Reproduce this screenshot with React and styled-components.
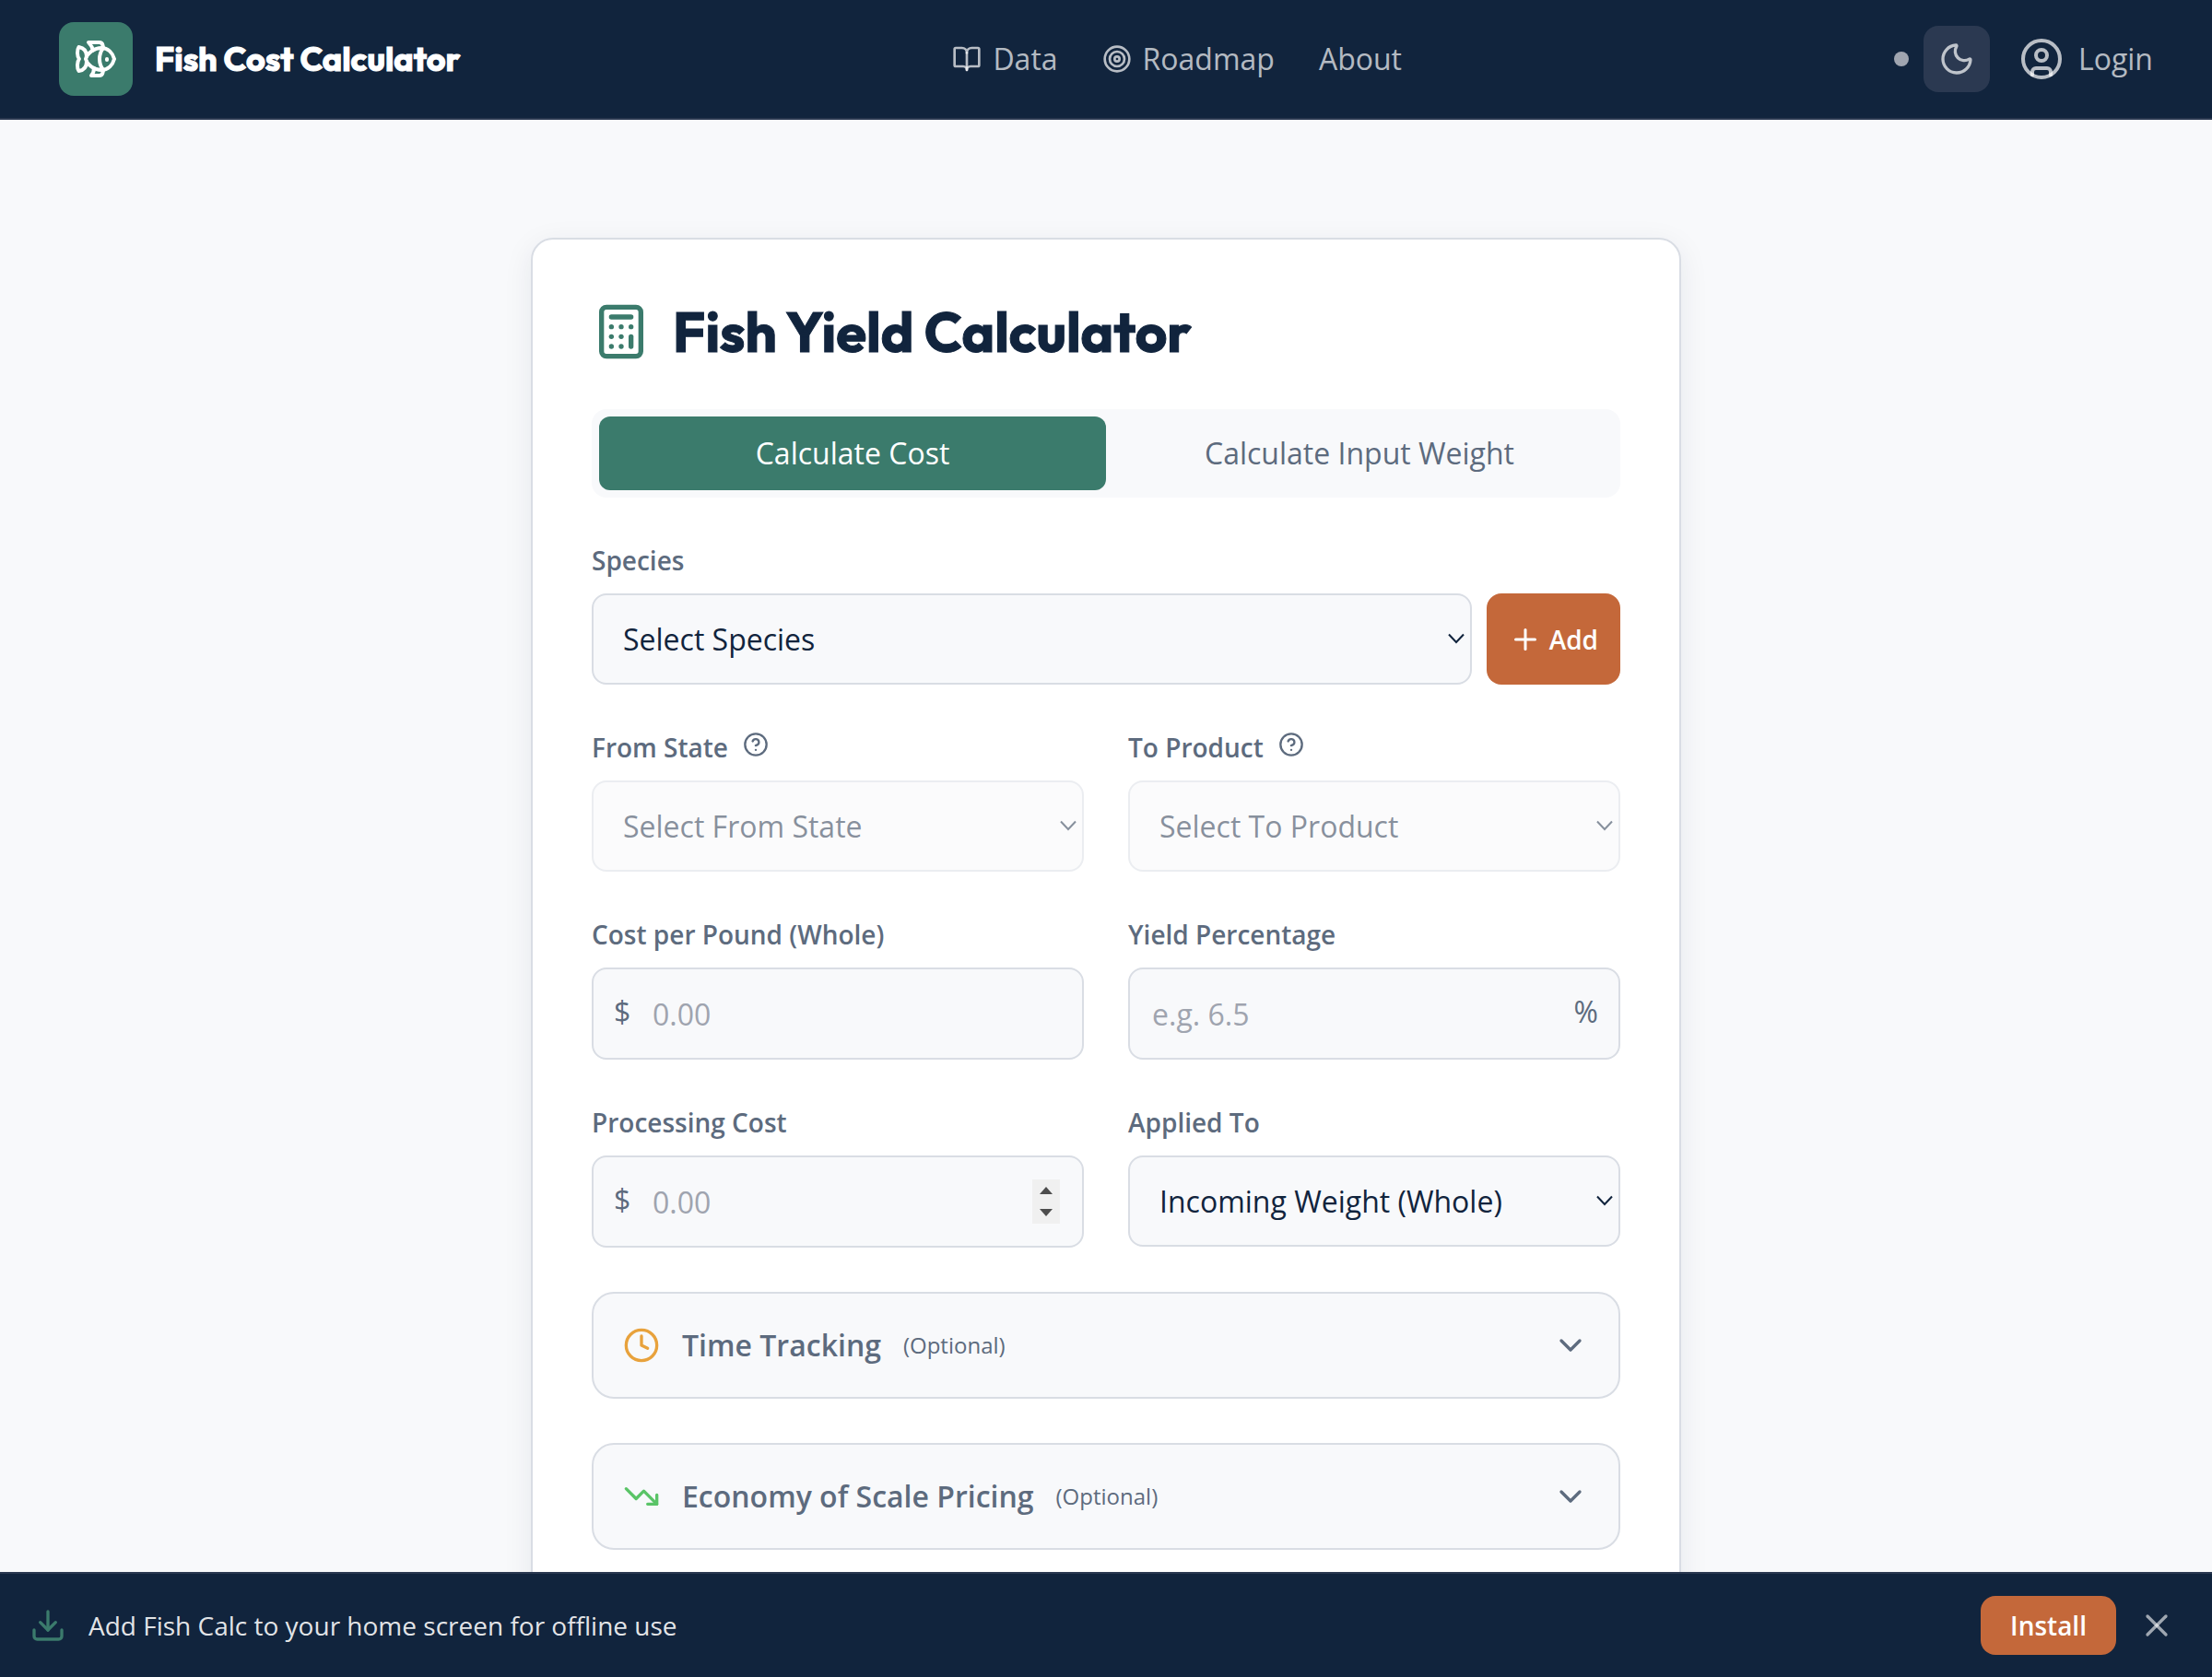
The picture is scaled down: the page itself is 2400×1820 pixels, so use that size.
import {useState} from "react";
import styled, {createGlobalStyle, css} from "styled-components";
import {
    BookOpen, Calculator, ChevronDown, CircleHelp, CircleUser, Clock, Download,
    Fish, Moon, Plus, Target, TrendingDown, X
} from "lucide-react";

const navy = "#11243d";
const green = "#3b7b6c";
const orange = "#c4683a";
const slate = "#5d6b7e";
const line = "#d9dde4";
const surface = "#f8f9fb";
const display = `Outfit, Lato, sans-serif`;

const GlobalStyle = createGlobalStyle`
  * {
    box-sizing: border-box;
  }

  body {
    margin: 0;
    background: ${surface};
    color: ${navy};
    font-family: "Open Sans", sans-serif;
    font-size: 32px;
    line-height: 48px;
  }

  button, input, select {
    margin: 0;
    font: inherit;
    color: inherit;
  }

  button {
    border: none;
    padding: 0;
    background: none;
    cursor: pointer;
  }

  svg {
    display: block;
    flex-shrink: 0;
  }
`
const Page = styled.div`
  display: flex;
  flex-direction: column;
  height: 100vh;
`
const Header = styled.header`
  display: flex;
  align-items: center;
  justify-content: space-between;
  padding: 24px 64px;
  background: ${navy};
  border-bottom: 2px solid #2a3850;
`
const Brand = styled.a`
  display: flex;
  align-items: center;
  gap: 24px;
  color: #fff;
  text-decoration: none;
  font: 700 36px/40px ${display};
  -webkit-text-stroke: 1px currentColor;
`
const Logo = styled.span`
  padding: 16px;
  border-radius: 16px;
  background: ${green};
`
const Nav = styled.nav`
  display: flex;
  gap: 48px;
`
const NavLink = styled.a`
  display: flex;
  align-items: center;
  gap: ${({$gap}) => $gap || 12}px;
  color: rgba(255, 255, 255, 0.7);
  text-decoration: none;
`
const HeaderActions = styled.div`
  display: flex;
  align-items: center;
  gap: 16px;
`
const StatusDot = styled.span`
  width: 16px;
  height: 16px;
  border-radius: 50%;
  background: #a0a5b0;
`
const ThemeToggle = styled.button`
  margin-right: 16px;
  padding: 16px;
  border-radius: 16px;
  background: #2b3951;
  color: rgba(255, 255, 255, 0.7);
`
const Main = styled.main`
  flex: 1;
  min-height: 0;
  overflow-y: auto;
  scrollbar-width: none;
  padding: 128px 64px;
`
const Card = styled.section`
  max-width: 1248px;
  margin: 0 auto;
  padding: 64px;
  border: 2px solid ${line};
  border-radius: 24px;
  background: #fff;
  box-shadow: 0 8px 32px rgba(17, 36, 61, 0.08);
`
const CardTitle = styled.h1`
  display: flex;
  align-items: center;
  gap: 24px;
  margin: 0 0 48px;
  font: 700 60px/72px ${display};
  -webkit-text-stroke: 1px currentColor;

  svg {
    color: ${green};
  }
`
const Tabs = styled.div`
  display: flex;
  padding: 8px;
  border-radius: 16px;
  background: ${surface};
`
const Tab = styled.button`
  flex: 1;
  padding: 16px;
  border-radius: 12px;
  color: ${slate};

  ${({$active}) => $active && css`
    background: ${green};
    color: #fff;
  `}
`
const Form = styled.form`
  display: flex;
  flex-direction: column;
  gap: 48px;
  margin-top: 48px;
`
const Columns = styled.div`
  display: grid;
  grid-template-columns: 1fr 1fr;
  gap: 48px;
`
const LabelRow = styled.div`
  display: flex;
  align-items: baseline;
  gap: 16px;
  height: 40px;
  margin-bottom: 16px;
  color: ${slate};
  font-size: 28px;
  font-weight: 600;
  line-height: 40px;
`
const HelpButton = styled.button`
  display: inline-flex;
`
const ControlRow = styled.div`
  display: flex;
  gap: 16px;
`
const Control = styled.div`
  position: relative;
  flex: 1;
  opacity: ${({$disabled}) => $disabled ? 0.5 : 1};
`
const box = css`
  display: block;
  width: 100%;
  border: 2px solid ${line};
  border-radius: 16px;
  background: ${surface};
`
const Select = styled.select`
  ${box};
  appearance: none;
  height: 99px;
  padding: 0 32px;
  opacity: 1;
`
const SelectArrow = styled.svg`
  position: absolute;
  top: 43px;
  right: 8px;
  pointer-events: none;
`
const Input = styled.input`
  ${box};
  appearance: textfield;
  height: 100px;
  padding: 0 64px 0 ${({$prefixed}) => $prefixed ? 64 : 24}px;

  &::placeholder {
    color: #9fa4af;
    opacity: 1;
  }

  &::-webkit-inner-spin-button {
    appearance: none;
  }
`
const Affix = styled.span`
  position: absolute;
  top: 24px;
  ${({$side}) => $side}: 24px;
  color: ${slate};
  pointer-events: none;
`
const Spinner = styled.div`
  position: absolute;
  top: 26px;
  right: 26px;
  display: flex;
  flex-direction: column;
  width: 30px;
  background: #f0f0f0;
`
const SpinButton = styled.button`
  display: flex;
  align-items: center;
  justify-content: center;
  height: 24px;
  color: #4d4d4d;
`
const AddButton = styled.button`
  display: flex;
  align-items: center;
  gap: 8px;
  padding: 0 24px;
  border-radius: 16px;
  background: ${orange};
  color: #fff;
  font-size: 28px;
  font-weight: 600;
`
const Accordion = styled.button`
  display: flex;
  align-items: center;
  gap: 24px;
  padding: 32px;
  border: 2px solid ${line};
  border-radius: 24px;
  background: ${surface};
  color: ${slate};
  font-weight: 600;
`
const AccordionIcon = styled.span`
  color: ${({$color}) => $color};
`
const Optional = styled.span`
  flex: 1;
  text-align: left;
  font-size: 24px;
  font-weight: 400;
`
const InstallBar = styled.aside`
  display: flex;
  align-items: center;
  gap: 16px;
  padding: 24px 32px;
  border-top: 2px solid #2a3850;
  background: ${navy};
  color: rgba(255, 255, 255, 0.9);
  font-size: 28px;
  line-height: 40px;
`
const InstallText = styled.p`
  display: flex;
  flex: 1;
  align-items: center;
  gap: 24px;
  margin: 0;

  svg {
    color: ${green};
  }
`
const InstallButton = styled.button`
  padding: 12px 32px;
  border-radius: 16px;
  background: ${orange};
  color: #fff;
  font-weight: 600;
`
const CloseButton = styled.button`
  padding: 8px;
  color: rgba(255, 255, 255, 0.6);
`

const Label = ({id, text, help}) => (
    <LabelRow>
        <label htmlFor={id}>{text}</label>
        {help && <HelpButton type="button" aria-label={`About ${text}`}>
            <CircleHelp size={28}/>
        </HelpButton>}
    </LabelRow>
)

const SelectField = ({id, options, disabled}) => (
    <Control $disabled={disabled}>
        <Select id={id} disabled={disabled}>
            {options.map(option => <option key={option}>{option}</option>)}
        </Select>
        <SelectArrow width="18" height="12" viewBox="0 0 18 12" fill="none" stroke="currentColor" strokeWidth="2">
            <path d="M1 1.5 9 10l8-8.5"/>
        </SelectArrow>
    </Control>
)

const ProcessingCost = () => {
    const [cost, setCost] = useState("")

    const step = (amount) => {
        setCost(Math.max(0, Number(cost) + amount).toFixed(2))
    }

    return (
        <Control>
            <Affix $side="left">$</Affix>
            <Input id="processing" type="number" placeholder="0.00" $prefixed value={cost}
                   onChange={e => setCost(e.currentTarget.value)}/>
            <Spinner>
                <SpinButton type="button" aria-label="Increase" onClick={() => step(0.01)}>
                    <svg width="14" height="8" viewBox="0 0 14 8" fill="currentColor"><path d="M0 8 7 0l7 8z"/></svg>
                </SpinButton>
                <SpinButton type="button" aria-label="Decrease" onClick={() => step(-0.01)}>
                    <svg width="14" height="8" viewBox="0 0 14 8" fill="currentColor"><path d="M0 0h14L7 8z"/></svg>
                </SpinButton>
            </Spinner>
        </Control>
    )
}

const App = () => {
    const [mode, setMode] = useState("cost")
    const [showInstall, setShowInstall] = useState(true)

    return (
        <Page>
            <GlobalStyle/>
            <Header>
                <Brand href="#">
                    <Logo><Fish size={48}/></Logo>
                    Fish Cost Calculator
                </Brand>
                <Nav>
                    <NavLink href="#data"><BookOpen size={32}/>Data</NavLink>
                    <NavLink href="#roadmap"><Target size={32}/>Roadmap</NavLink>
                    <NavLink href="#about">About</NavLink>
                </Nav>
                <HeaderActions>
                    <StatusDot/>
                    <ThemeToggle aria-label="Toggle theme"><Moon size={40}/></ThemeToggle>
                    <NavLink href="#login" $gap={16}><CircleUser size={48}/>Login</NavLink>
                </HeaderActions>
            </Header>

            <Main>
                <Card>
                    <CardTitle><Calculator size={64}/>Fish Yield Calculator</CardTitle>
                    <Tabs>
                        <Tab $active={mode === "cost"} onClick={() => setMode("cost")}>Calculate Cost</Tab>
                        <Tab $active={mode === "weight"} onClick={() => setMode("weight")}>
                            Calculate Input Weight
                        </Tab>
                    </Tabs>

                    <Form>
                        <div>
                            <Label id="species" text="Species"/>
                            <ControlRow>
                                <SelectField id="species" options={["Select Species"]}/>
                                <AddButton type="button"><Plus size={36}/>Add</AddButton>
                            </ControlRow>
                        </div>
                        <Columns>
                            <div>
                                <Label id="from" text="From State" help/>
                                <SelectField id="from" options={["Select From State"]} disabled/>
                            </div>
                            <div>
                                <Label id="to" text="To Product" help/>
                                <SelectField id="to" options={["Select To Product"]} disabled/>
                            </div>
                        </Columns>
                        <Columns>
                            <div>
                                <Label id="cost" text="Cost per Pound (Whole)"/>
                                <Control>
                                    <Affix $side="left">$</Affix>
                                    <Input id="cost" inputMode="decimal" placeholder="0.00" $prefixed/>
                                </Control>
                            </div>
                            <div>
                                <Label id="yield" text="Yield Percentage"/>
                                <Control>
                                    <Input id="yield" inputMode="decimal" placeholder="e.g. 6.5"/>
                                    <Affix $side="right">%</Affix>
                                </Control>
                            </div>
                        </Columns>
                        <Columns>
                            <div>
                                <Label id="processing" text="Processing Cost"/>
                                <ProcessingCost/>
                            </div>
                            <div>
                                <Label id="applied" text="Applied To"/>
                                <SelectField id="applied" options={["Incoming Weight (Whole)"]}/>
                            </div>
                        </Columns>
                        <Accordion type="button">
                            <AccordionIcon $color="#e8a23c"><Clock size={40}/></AccordionIcon>
                            Time Tracking
                            <Optional>(Optional)</Optional>
                            <ChevronDown size={40}/>
                        </Accordion>
                        <Accordion type="button">
                            <AccordionIcon $color="#5ac467"><TrendingDown size={40}/></AccordionIcon>
                            Economy of Scale Pricing
                            <Optional>(Optional)</Optional>
                            <ChevronDown size={40}/>
                        </Accordion>
                    </Form>
                </Card>
            </Main>

            {showInstall && <InstallBar>
                <InstallText>
                    <Download size={40}/>
                    Add Fish Calc to your home screen for offline use
                </InstallText>
                <InstallButton>Install</InstallButton>
                <CloseButton aria-label="Dismiss" onClick={() => setShowInstall(false)}>
                    <X size={40}/>
                </CloseButton>
            </InstallBar>}
        </Page>
    )
}

export default App
